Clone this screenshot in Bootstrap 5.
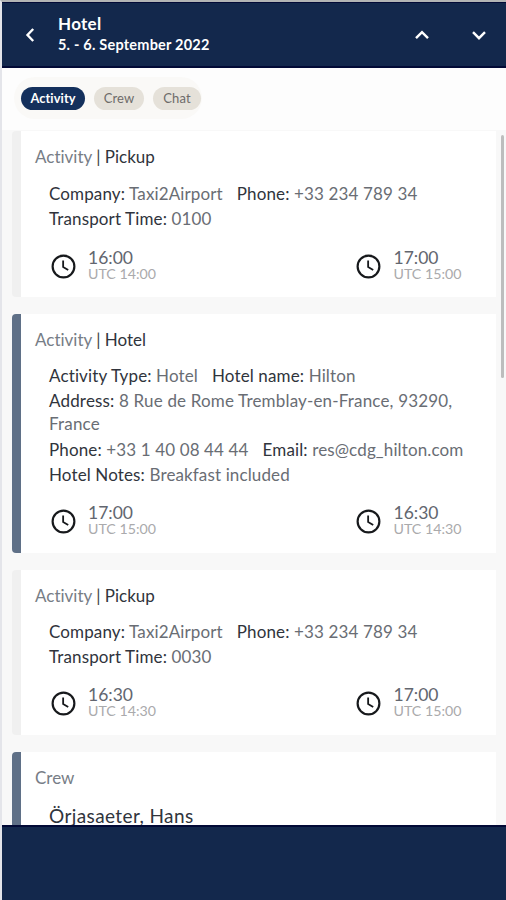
<!DOCTYPE html>
<html lang="en">
<head>
<meta charset="utf-8">
<meta name="viewport" content="width=device-width, initial-scale=1">
<title>Hotel</title>
<link href="https://cdn.jsdelivr.net/npm/bootstrap@5.3.0/dist/css/bootstrap.min.css" rel="stylesheet">
<style>
body{font-family:Lato,"Noto Sans",sans-serif;height:900px;background:#fdfdfd;color:#3c4048;overflow:hidden;font-size:17px;font-variant-ligatures:none}
.app{height:900px;border-top:2px solid #b3b5b5;border-left:2px solid #e4e5ea}
.topbar{height:66px;background:#13284c;border-top:1px solid #020a36;border-bottom:2px solid #020a36;color:#fff;padding:0 17px 0 18px}
.heading{margin-left:18px;font-weight:700}
.h-name{font-size:17px;line-height:21px;letter-spacing:.3px;margin-top:-1px}
.h-date{font-size:14.5px;line-height:21px;letter-spacing:.21px}
.next{margin-left:37px}
.tabs-zone{height:62px;padding:9px 0 0 12px}
.tabs-pill{width:188px;height:42px;border-radius:21px;background:#faf9f7;padding:0 7px;gap:9px}
.tab-chip{height:23px;flex:none;border:0;border-radius:12px;background:#e5e1d9;color:#6d6b69;font-size:13px;line-height:22px;padding:0;letter-spacing:.1px}
.tab-chip.active{background:#14305c;color:#fff;font-weight:700;font-size:12.8px}
.w-act{width:64px}.w-crew{width:50px}.w-chat{width:48px}
.feed{height:695px;background:#f8f8f8;padding:1px 10px 0 10px}
.entry{background:#fff;border-left:9px solid #f0f0f0;border-radius:4px 0 0 4px;margin-bottom:17px;padding:13px 0 0 14px}
.entry.on{border-left-color:#5f7087}
.e1{height:166px}.e2{height:239px}.e3{height:165px}
.title{line-height:25px;color:#777d86;margin-top:-.5px}
.title b,.facts b{font-weight:400;color:#30343c}
.title i{font-style:normal;color:#444}
.facts{padding:11.5px 0 0 14px;line-height:25px;color:#696d74;letter-spacing:.13px}
.e1 .facts{padding-top:12px;line-height:25.5px}
.facts>div{gap:14px}
.facts .addr{line-height:23px;padding:1px 0 2px;letter-spacing:.17px}
.times{padding:17px 0 0 14px;line-height:17px}
.slot{width:305.5px;gap:10px;flex:none}
.slot svg{position:relative;top:1.5px;left:-.5px}
.t{font-size:17.5px;line-height:17px;color:#62666f}
.u{font-size:14.2px;line-height:15px;color:#aaaaac}
.thumb{right:2px;top:133px;width:3px;height:243px;background:#bdbdbd;border-radius:2px}
.person{font-size:19px;color:#30343c;padding:13px 0 0 14px;line-height:26px;letter-spacing:.4px}
.foot{height:75px;background:#13284c;border-top:2px solid #020a36}
</style>
<script src="https://cdn.jsdelivr.net/npm/bootstrap@5.3.0/dist/js/bootstrap.bundle.min.js"></script>
</head>
<body>
<svg class="d-none"><symbol id="clock" viewBox="0 0 24 24"><circle cx="12" cy="12" r="9" fill="none" stroke="#17191c" stroke-width="1.8"/><path d="M11.7 7v5.400l4.200 2.500" fill="none" stroke="#17191c" stroke-width="1.5"/></symbol></svg>
<div class="app d-flex flex-column position-relative">
<header class="topbar d-flex align-items-center flex-shrink-0">
<svg width="20" height="20" viewBox="0 0 20 20" fill="none" stroke="#fff" stroke-width="2.4"><path d="M13.2 4 7.5 10l5.700 6"/></svg>
<div class="heading"><div class="h-name">Hotel</div><div class="h-date">5. - 6. September 2022</div></div>
<svg class="ms-auto" width="20" height="20" viewBox="0 0 20 20" fill="none" stroke="#fff" stroke-width="2.4"><path d="m4 13.200 6-6 6 6"/></svg>
<svg class="next" width="20" height="20" viewBox="0 0 20 20" fill="none" stroke="#fff" stroke-width="2.4"><path d="m4 7.200 6 6 6-6"/></svg>
</header>
<nav class="tabs-zone flex-shrink-0"><div class="tabs-pill d-flex align-items-center">
<button class="tab-chip w-act active">Activity</button><button class="tab-chip w-crew">Crew</button><button class="tab-chip w-chat">Chat</button>
</div></nav>
<main class="feed overflow-hidden flex-shrink-0">
<section class="entry e1"><div class="title">Activity <i>|</i> <b>Pickup</b></div>
<div class="facts"><div class="d-flex"><span><b>Company:</b> Taxi2Airport</span><span><b>Phone:</b> +33 234 789 34</span></div><div><b>Transport Time:</b> 0100</div></div>
<div class="times d-flex"><div class="slot d-flex align-items-center"><svg width="29" height="29"><use href="#clock"/></svg><div><div class="t">16:00</div><div class="u">UTC 14:00</div></div></div><div class="slot d-flex align-items-center"><svg width="29" height="29"><use href="#clock"/></svg><div><div class="t">17:00</div><div class="u">UTC 15:00</div></div></div></div></section>
<section class="entry on e2"><div class="title">Activity <i>|</i> <b>Hotel</b></div>
<div class="facts"><div class="d-flex"><span><b>Activity Type:</b> Hotel</span><span><b>Hotel name:</b> Hilton</span></div><div class="addr"><b>Address:</b> 8 Rue de Rome Tremblay-en-France, 93290,<br>France</div><div class="d-flex"><span><b>Phone:</b> +33 1 40 08 44 44</span><span><b>Email:</b> res@cdg_hilton.com</span></div><div><b>Hotel Notes:</b> Breakfast included</div></div>
<div class="times d-flex"><div class="slot d-flex align-items-center"><svg width="29" height="29"><use href="#clock"/></svg><div><div class="t">17:00</div><div class="u">UTC 15:00</div></div></div><div class="slot d-flex align-items-center"><svg width="29" height="29"><use href="#clock"/></svg><div><div class="t">16:30</div><div class="u">UTC 14:30</div></div></div></div></section>
<section class="entry e3"><div class="title">Activity <i>|</i> <b>Pickup</b></div>
<div class="facts"><div class="d-flex"><span><b>Company:</b> Taxi2Airport</span><span><b>Phone:</b> +33 234 789 34</span></div><div><b>Transport Time:</b> 0030</div></div>
<div class="times d-flex"><div class="slot d-flex align-items-center"><svg width="29" height="29"><use href="#clock"/></svg><div><div class="t">16:30</div><div class="u">UTC 14:30</div></div></div><div class="slot d-flex align-items-center"><svg width="29" height="29"><use href="#clock"/></svg><div><div class="t">17:00</div><div class="u">UTC 15:00</div></div></div></div></section>
<section class="entry on e3"><div class="title">Crew</div><div class="person">Örjasaeter, Hans</div></section>
</main>
<footer class="foot flex-shrink-0"></footer>
<div class="thumb position-absolute"></div>
</div>
</body>
</html>
